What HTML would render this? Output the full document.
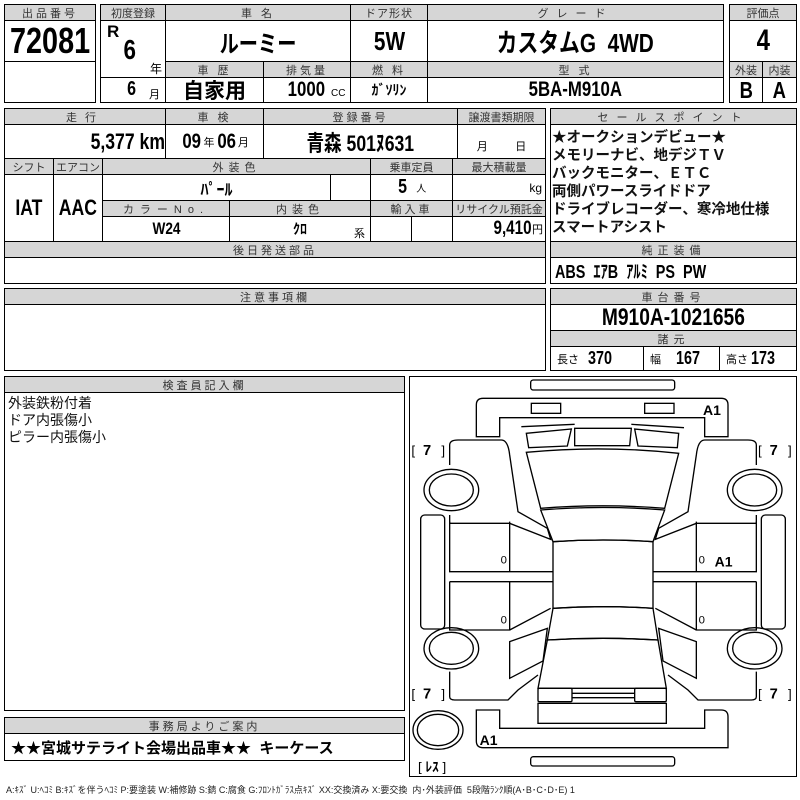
<!DOCTYPE html>
<html><head><meta charset="utf-8"><style>
body{margin:0;width:800px;height:800px;background:#fff;position:relative;overflow:hidden;font-family:"Liberation Sans","Noto Sans CJK JP",sans-serif;color:#000}
.c{position:absolute;border:1px solid #000;box-sizing:border-box;display:flex;align-items:center;justify-content:center;white-space:nowrap}
.h{background:#d6d6d6;font-size:11px;letter-spacing:3px;color:#333}
.b{font-weight:bold}
.n{display:inline-block;transform:scaleX(.8);font-weight:bold}
.t{position:absolute;white-space:nowrap}
</style></head><body>
<!-- box1 -->
<div class="c h" style="left:4px;top:4px;width:92px;height:17px">出品番号</div>
<div class="c" style="left:4px;top:20px;width:92px;height:42px;font-size:36px"><span class="n">72081</span></div>
<div class="c" style="left:4px;top:61px;width:92px;height:42px"></div>
<!-- box2 -->
<div class="c h" style="left:100px;top:4px;width:66px;height:17px;letter-spacing:0">初度登録</div>
<div class="c h" style="left:165px;top:4px;width:186px;height:17px">車 名</div>
<div class="c h" style="left:350px;top:4px;width:78px;height:17px;letter-spacing:1px">ドア形状</div>
<div class="c h" style="left:427px;top:4px;width:297px;height:17px;letter-spacing:8px">グレード</div>
<div class="c" style="left:100px;top:20px;width:66px;height:58px"></div>
<div class="t b" style="left:107px;top:22px;font-size:17px">R</div>
<div class="t" style="left:122px;top:34px;font-size:28px"><span class="n">6</span></div>
<div class="t" style="left:150px;top:60px;font-size:12px">年</div>
<div class="c" style="left:165px;top:20px;width:186px;height:42px;font-size:24px"><span class="n">ルーミー</span></div>
<div class="c" style="left:350px;top:20px;width:78px;height:42px;font-size:26px"><span class="n">5W</span></div>
<div class="c" style="left:427px;top:20px;width:297px;height:42px;font-size:26px"><span class="n">カスタムG&nbsp;&nbsp;4WD</span></div>
<div class="c h" style="left:165px;top:61px;width:99px;height:17px">車 歴</div>
<div class="c h" style="left:263px;top:61px;width:88px;height:17px">排気量</div>
<div class="c h" style="left:350px;top:61px;width:78px;height:17px">燃 料</div>
<div class="c h" style="left:427px;top:61px;width:297px;height:17px">型 式</div>
<div class="c" style="left:100px;top:77px;width:66px;height:26px"></div>
<div class="t" style="left:126px;top:78px;font-size:20px"><span class="n">6</span></div>
<div class="t" style="left:149px;top:86px;font-size:11px">月</div>
<div class="c b" style="left:165px;top:77px;width:99px;height:26px;font-size:21px">自家用</div>
<div class="c" style="left:263px;top:77px;width:88px;height:26px"></div>
<div class="t" style="left:283px;top:78px;font-size:21px"><span class="n">1000</span></div>
<div class="t" style="left:331px;top:88px;font-size:10px">CC</div>
<div class="c b" style="left:350px;top:77px;width:78px;height:26px;font-size:14px">ｶﾞｿﾘﾝ</div>
<div class="c" style="left:427px;top:77px;width:297px;height:26px;font-size:21px"><span class="n">5BA-M910A</span></div>
<!-- box3 -->
<div class="c h" style="left:729px;top:4px;width:68px;height:17px;letter-spacing:0">評価点</div>
<div class="c" style="left:729px;top:20px;width:68px;height:42px;font-size:30px"><span class="n">4</span></div>
<div class="c h" style="left:729px;top:61px;width:34px;height:17px;letter-spacing:0">外装</div>
<div class="c h" style="left:762px;top:61px;width:35px;height:17px;letter-spacing:0">内装</div>
<div class="c" style="left:729px;top:77px;width:34px;height:26px;font-size:23px"><span class="n">B</span></div>
<div class="c" style="left:762px;top:77px;width:35px;height:26px;font-size:23px"><span class="n">A</span></div>
<!-- section 2 -->
<div class="c h" style="left:4px;top:108px;width:162px;height:17px;letter-spacing:8px">走行</div>
<div class="c h" style="left:165px;top:108px;width:99px;height:17px">車 検</div>
<div class="c h" style="left:263px;top:108px;width:195px;height:17px">登録番号</div>
<div class="c h" style="left:457px;top:108px;width:89px;height:17px;letter-spacing:0">譲渡書類期限</div>
<div class="c" style="left:4px;top:124px;width:162px;height:35px;justify-content:flex-end;padding-right:0"><span class="n" style="font-size:22px;transform-origin:right">5,377 km</span></div>
<div class="c" style="left:165px;top:124px;width:99px;height:35px"><span class="n" style="font-size:21px">09</span><span style="font-size:11px">年</span><span class="n" style="font-size:21px">06</span><span style="font-size:11px">月</span></div>
<div class="c" style="left:263px;top:124px;width:195px;height:35px;font-size:22px"><span class="n">青森 501ﾇ631</span></div>
<div class="c" style="left:457px;top:124px;width:89px;height:35px;font-size:11px;align-items:flex-end;padding-bottom:4px">月&nbsp;&nbsp;&nbsp;&nbsp;&nbsp;&nbsp;&nbsp;&nbsp;&nbsp;日</div>
<div class="c h" style="left:4px;top:158px;width:50px;height:17px;letter-spacing:0">シフト</div>
<div class="c h" style="left:53px;top:158px;width:50px;height:17px;letter-spacing:0">エアコン</div>
<div class="c h" style="left:102px;top:158px;width:269px;height:17px;letter-spacing:5px">外装色</div>
<div class="c h" style="left:370px;top:158px;width:83px;height:17px;letter-spacing:0">乗車定員</div>
<div class="c h" style="left:452px;top:158px;width:94px;height:17px;letter-spacing:0">最大積載量</div>
<div class="c" style="left:4px;top:174px;width:50px;height:68px;font-size:22px"><span class="n">IAT</span></div>
<div class="c" style="left:53px;top:174px;width:50px;height:68px;font-size:22px"><span class="n">AAC</span></div>
<div class="c b" style="left:102px;top:174px;width:229px;height:27px;font-size:16px">ﾊﾟｰﾙ</div>
<div class="c" style="left:330px;top:174px;width:41px;height:27px"></div>
<div class="c" style="left:370px;top:174px;width:83px;height:27px"><span class="n" style="font-size:20px">5</span><span style="font-size:10px">&nbsp;&nbsp;&nbsp;人</span></div>
<div class="c" style="left:452px;top:174px;width:94px;height:27px;justify-content:flex-end;padding-right:3px;font-size:12px">kg</div>
<div class="c h" style="left:102px;top:200px;width:128px;height:17px;letter-spacing:6px">カラーNo.</div>
<div class="c h" style="left:229px;top:200px;width:142px;height:17px;letter-spacing:5px">内装色</div>
<div class="c h" style="left:370px;top:200px;width:83px;height:17px">輸入車</div>
<div class="c h" style="left:452px;top:200px;width:94px;height:17px;letter-spacing:0">リサイクル預託金</div>
<div class="c" style="left:102px;top:216px;width:128px;height:26px;font-size:17px"><span class="n">W24</span></div>
<div class="c b" style="left:229px;top:216px;width:142px;height:26px;font-size:14px">ｸﾛ</div>
<div class="t" style="left:354px;top:225px;font-size:11px">系</div>
<div class="c" style="left:370px;top:216px;width:42px;height:26px"></div>
<div class="c" style="left:411px;top:216px;width:42px;height:26px"></div>
<div class="c" style="left:452px;top:216px;width:94px;height:26px;justify-content:flex-end;padding-right:2px"><span class="n" style="font-size:19px;transform-origin:right">9,410</span><span style="font-size:11px">円</span></div>
<div class="c h" style="left:4px;top:241px;width:542px;height:17px">後日発送部品</div>
<div class="c" style="left:4px;top:257px;width:542px;height:27px"></div>
<!-- sales -->
<div class="c h" style="left:550px;top:108px;width:247px;height:17px;letter-spacing:8px">セールスポイント</div>
<div class="c" style="left:550px;top:124px;width:247px;height:118px"></div>
<div class="t" style="left:552px;top:129px;font-size:14.5px;line-height:18px;font-weight:bold;color:#111">★オークションデビュー★<br>メモリーナビ、地デジＴＶ<br>バックモニター、ＥＴＣ<br>両側パワースライドドア<br>ドライブレコーダー、寒冷地仕様<br>スマートアシスト</div>
<div class="c h" style="left:550px;top:241px;width:247px;height:17px;letter-spacing:5px">純正装備</div>
<div class="c" style="left:550px;top:257px;width:247px;height:27px;justify-content:flex-start;padding-left:4px"><span class="n" style="font-size:18px;transform-origin:left">ABS&nbsp; ｴｱB&nbsp; ｱﾙﾐ&nbsp; PS&nbsp; PW</span></div>
<!-- section3 -->
<div class="c h" style="left:4px;top:288px;width:542px;height:17px">注意事項欄</div>
<div class="c" style="left:4px;top:304px;width:542px;height:67px"></div>
<div class="c h" style="left:550px;top:288px;width:247px;height:17px;letter-spacing:5px">車台番号</div>
<div class="c" style="left:550px;top:304px;width:247px;height:27px;font-size:24px"><span class="n">M910A-1021656</span></div>
<div class="c h" style="left:550px;top:330px;width:247px;height:17px;letter-spacing:5px">諸元</div>
<div class="c" style="left:550px;top:346px;width:94px;height:25px;justify-content:flex-start;padding-left:6px"><span style="font-size:11px">長さ&nbsp;&nbsp;&nbsp;</span><span class="n" style="font-size:18px;transform-origin:left">370</span></div>
<div class="c" style="left:643px;top:346px;width:77px;height:25px;justify-content:flex-start;padding-left:6px"><span style="font-size:11px">幅&nbsp;&nbsp;&nbsp;&nbsp;&nbsp;</span><span class="n" style="font-size:18px;transform-origin:left">167</span></div>
<div class="c" style="left:719px;top:346px;width:78px;height:25px;justify-content:flex-start;padding-left:6px"><span style="font-size:11px">高さ&nbsp;</span><span class="n" style="font-size:18px;transform-origin:left">173</span></div>
<!-- inspector -->
<div class="c h" style="left:4px;top:376px;width:401px;height:17px">検査員記入欄</div>
<div class="c" style="left:4px;top:392px;width:401px;height:319px"></div>
<div class="t" style="left:8px;top:395px;font-size:14px;line-height:17px;color:#111">外装鉄粉付着<br>ドア内張傷小<br>ピラー内張傷小</div>
<div class="c h" style="left:4px;top:717px;width:401px;height:17px">事務局よりご案内</div>
<div class="c" style="left:4px;top:733px;width:401px;height:28px;justify-content:flex-start;padding-left:6px;font-size:15px;font-weight:bold">★★宮城サテライト会場出品車★★&nbsp; キーケース</div>
<!-- diagram -->
<div class="c" style="left:409px;top:376px;width:388px;height:401px"></div>
<svg style="position:absolute;left:408px;top:375px" width="392" height="425" viewBox="0 0 1176 1275">
<g fill="none" stroke="#000" stroke-width="4">
<rect x="368" y="15" width="432" height="30" rx="8"/>
<rect x="368" y="1145" width="432" height="28" rx="8"/>
<path d="M225,70 H940 Q960,70 960,90 V185 H890 V128 H275 V185 H205 V90 Q205,70 225,70 Z"/>
<path d="M205,1005 H275 V1060 H890 V1005 H940 Q960,1005 960,1025 V1118 H225 Q205,1118 205,1098 Z"/>
<rect x="370" y="85" width="88" height="30"/><rect x="710" y="85" width="88" height="30"/>
<path d="M340,155 L500,148 M670,148 L828,158"/>
<path d="M355,175 L490,162 L478,213 L362,218 Z"/>
<path d="M680,162 L812,175 L808,218 L690,213 Z"/>
<path d="M500,160 L670,160 L665,212 L500,212 Z"/>
<path d="M355,232 Q585,210 812,235 L770,400 Q585,385 398,400 Z"/>
<path d="M398,405 Q585,390 770,405 L735,500 Q585,490 435,500 Z"/>
<path d="M435,500 Q585,490 735,500 V700 Q585,690 435,700 Z"/>
<path d="M435,700 Q585,690 735,700 L750,795 Q585,785 418,795 Z"/>
<path d="M418,795 Q585,785 750,795 L775,940 H390 Z"/>
<rect x="390" y="985" width="385" height="60"/>
<rect x="390" y="940" width="102" height="40" rx="4"/><rect x="680" y="940" width="95" height="40" rx="4"/>
<path d="M492,955 H680 M492,968 H680"/>
<g id="L">
<path d="M150,195 H280 Q300,195 305,240 L330,410 L418,460 L428,493 L305,445 H125 V420 M125,270 V210 Q125,195 150,195"/>
<rect x="38" y="420" width="72" height="342" rx="12"/>
<ellipse cx="130" cy="345" rx="82" ry="62"/><ellipse cx="130" cy="345" rx="66" ry="48"/>
<ellipse cx="130" cy="820" rx="82" ry="62"/><ellipse cx="130" cy="820" rx="66" ry="48"/>
<path d="M125,440 V590 H435 M125,620 H435 M125,620 V765 H305 V620 M305,440 V590 M305,765 L428,700"/>
<path d="M305,800 L418,760 L405,858 L305,910 Z"/>
<path d="M125,890 V965 Q125,975 140,975 H300 L330,945 L390,900"/>
</g>
<use href="#L" transform="translate(1170,0) scale(-1,1)"/>
<ellipse cx="90" cy="1065" rx="75" ry="58"/><ellipse cx="90" cy="1065" rx="62" ry="47"/>
</g>
<g font-family="Liberation Sans,Noto Sans CJK JP,sans-serif" font-weight="bold" fill="#000">
<text x="885" y="120" font-size="42">A1</text>
<text x="920" y="575" font-size="42">A1</text>
<text x="215" y="1110" font-size="42">A1</text>
<text x="10" y="240" font-size="40" font-weight="normal">[</text><text x="45" y="240" font-size="44">7</text><text x="100" y="240" font-size="40" font-weight="normal">]</text>
<text x="1050" y="240" font-size="40" font-weight="normal">[</text><text x="1085" y="240" font-size="44">7</text><text x="1140" y="240" font-size="40" font-weight="normal">]</text>
<text x="10" y="970" font-size="40" font-weight="normal">[</text><text x="45" y="970" font-size="44">7</text><text x="100" y="970" font-size="40" font-weight="normal">]</text>
<text x="1050" y="970" font-size="40" font-weight="normal">[</text><text x="1085" y="970" font-size="44">7</text><text x="1140" y="970" font-size="40" font-weight="normal">]</text>
<text x="30" y="1190" font-size="40"><tspan font-weight="normal">[</tspan> ﾚｽ <tspan font-weight="normal">]</tspan></text>
<text x="278" y="565" font-size="34" font-weight="normal">0</text><text x="278" y="745" font-size="34" font-weight="normal">0</text>
<text x="872" y="565" font-size="34" font-weight="normal">0</text><text x="872" y="745" font-size="34" font-weight="normal">0</text>
</g>
</svg>
<div class="t" style="left:6px;top:783px;font-size:9px;color:#222">A:ｷｽﾞ U:ﾍｺﾐ B:ｷｽﾞを伴うﾍｺﾐ P:要塗装 W:補修跡 S:錆 C:腐食 G:ﾌﾛﾝﾄｶﾞﾗｽ点ｷｽﾞ XX:交換済み X:要交換&nbsp;&nbsp;内･外装評価&nbsp;&nbsp;5段階ﾗﾝｸ順(A･B･C･D･E) 1</div>
</body></html>
